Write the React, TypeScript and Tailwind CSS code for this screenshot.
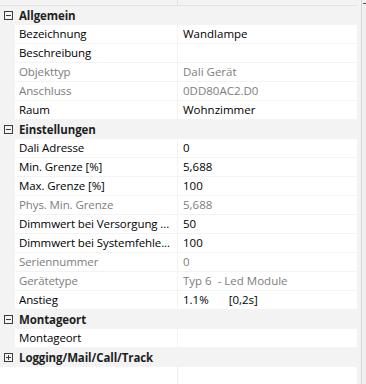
import React from "react";

type Row =
  | { kind: "group"; label: string; open: boolean }
  | { kind: "prop"; name: string; value?: React.ReactNode; dim?: boolean };

const rows: Row[] = [
  { kind: "group", label: "Allgemein", open: true },
  { kind: "prop", name: "Bezeichnung", value: "Wandlampe" },
  { kind: "prop", name: "Beschreibung", value: "" },
  { kind: "prop", name: "Objekttyp", value: "Dali Gerät", dim: true },
  { kind: "prop", name: "Anschluss", value: "0DD80AC2.D0", dim: true },
  { kind: "prop", name: "Raum", value: "Wohnzimmer" },
  { kind: "group", label: "Einstellungen", open: true },
  { kind: "prop", name: "Dali Adresse", value: "0" },
  { kind: "prop", name: "Min. Grenze [%]", value: "5,688" },
  { kind: "prop", name: "Max. Grenze [%]", value: "100" },
  { kind: "prop", name: "Phys. Min. Grenze", value: "5,688", dim: true },
  { kind: "prop", name: "Dimmwert bei Versorgung ...", value: "50" },
  { kind: "prop", name: "Dimmwert bei Systemfehle...", value: "100" },
  { kind: "prop", name: "Seriennummer", value: "0", dim: true },
  { kind: "prop", name: "Gerätetype", value: "Typ 6  - Led Module", dim: true },
  {
    kind: "prop",
    name: "Anstieg",
    value: (
      <>
        <span>1.1%</span>
        <span className="ml-[20px]">[0,2s]</span>
      </>
    ),
  },
  { kind: "group", label: "Montageort", open: true },
  { kind: "prop", name: "Montageort", value: "" },
  { kind: "group", label: "Logging/Mail/Call/Track", open: false },
];

function ToggleBox({ open }: { open: boolean }) {
  return (
    <svg width="9" height="9" viewBox="0 0 9 9" className="block">
      <rect x="0.5" y="0.5" width="8" height="8" fill="none" stroke="#3c3c3c" />
      <line x1="2" y1="4.5" x2="7" y2="4.5" stroke="#3c3c3c" />
      {!open && <line x1="4.5" y1="2" x2="4.5" y2="7" stroke="#3c3c3c" />}
    </svg>
  );
}

export default function App() {
  return (
    <div
      className="w-[366px] h-[384px] overflow-hidden bg-white flex text-[11.5px] text-black"
      style={{ fontFamily: '"Segoe UI", "Open Sans", "Noto Sans", sans-serif' }}
    >
      <div className="w-[357px] flex flex-col bg-[#f3f3f3]">
        {/* tail of the row above */}
        <div className="h-[5px] flex shrink-0">
          <div className="w-[177px]" />
          <div className="w-px bg-[#e3e3e3]" />
        </div>
        <div className="h-px bg-[#e3e3e3] shrink-0" />

        {rows.map((r, i) =>
          r.kind === "group" ? (
            <div key={i} className="h-[19px] shrink-0 flex items-center">
              <div className="w-[15px] flex justify-center pl-[1px]">
                <ToggleBox open={r.open} />
              </div>
              <span className="pl-[4px] font-bold text-[#1e1e1e] leading-[19px] tracking-[-0.1px]">
                {r.label}
              </span>
            </div>
          ) : (
            <div key={i} className="h-[19px] shrink-0 flex pb-px">
              <div className="w-[15px]" />
              <div
                className={`w-[162px] bg-white pl-[4px] leading-[18px] whitespace-nowrap overflow-hidden tracking-[-0.1px] ${
                  r.dim ? "text-[#7d7d7d]" : "text-black"
                }`}
              >
                {r.name}
              </div>
              <div className="w-px" />
              <div
                className={`flex-1 bg-white pl-[5px] leading-[18px] whitespace-pre overflow-hidden ${
                  r.dim ? "text-[#7d7d7d]" : "text-black"
                }`}
              >
                {r.value}
              </div>
            </div>
          )
        )}

        <div className="flex-1 flex bg-white">
          <div className="w-[177px]" />
          <div className="w-px bg-[#ececec]" />
        </div>
      </div>

      {/* scrollbar edge */}
      <div className="flex-1 flex bg-[#f3f3f3]">
        <div className="w-[4px]" />
        <div className="w-px bg-[#d6d6d6]" />
        <div className="flex-1 bg-[#f0f0f0] relative">
          <div className="absolute top-[3px] left-[1px] w-[3px] h-px bg-[#555]" />
        </div>
      </div>
    </div>
  );
}
